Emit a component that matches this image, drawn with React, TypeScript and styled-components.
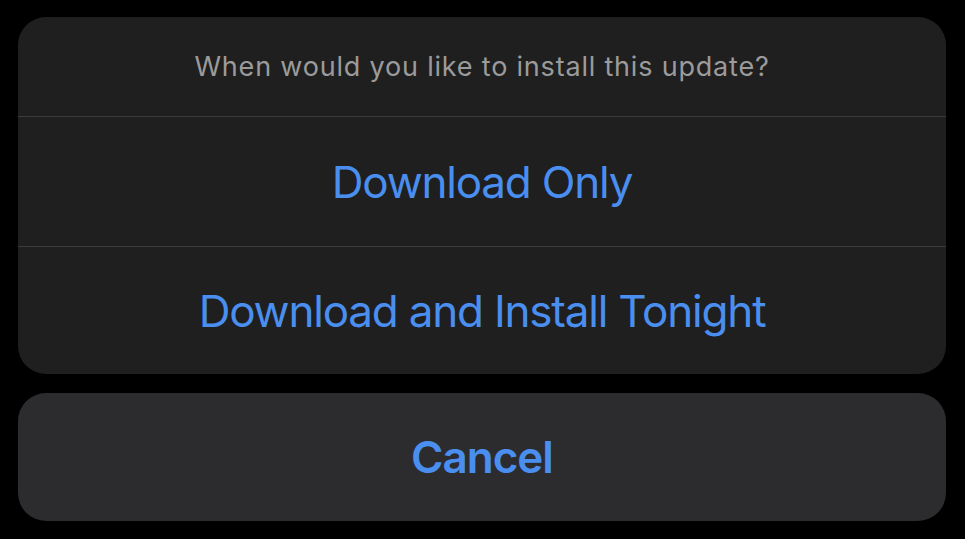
import styled, { createGlobalStyle } from 'styled-components'

const Global = createGlobalStyle`
  html, body {
    margin: 0;
    background: #000;
    font-family: Inter, "Noto Sans", sans-serif;
    -webkit-font-smoothing: antialiased;
  }
`

const Sheet = styled.div`
  width: 965px;
  height: 539px;
  box-sizing: border-box;
  padding: 17px 19px 0 18px;
  display: flex;
  flex-direction: column;
  gap: 19px;
`

const Group = styled.div<{ $tone: string }>`
  background: ${p => p.$tone};
  border-radius: 28px;
  overflow: hidden;
  display: flex;
  flex-direction: column;
`

const Title = styled.div`
  height: 99px;
  display: flex;
  align-items: center;
  justify-content: center;
  color: #9b9b9b;
  font-size: 27px;
  letter-spacing: 0.8px;
  border-bottom: 1.5px solid #3c3c3e;
`

const Action = styled.button<{ $bold?: boolean; $divider?: boolean; $h: number }>`
  all: unset;
  height: ${p => p.$h}px;
  display: flex;
  align-items: center;
  justify-content: center;
  color: #4a8ff0;
  font-family: Inter, "Noto Sans", sans-serif;
  font-size: 44px;
  letter-spacing: ${p => (p.$bold ? -1 : -1.2)}px;
  font-weight: ${p => (p.$bold ? 600 : 400)};
  border-bottom: ${p => (p.$divider ? '1.5px solid #3c3c3e' : 'none')};
  cursor: pointer;
`

export default function App() {
  return (
    <>
      <Global />
      <Sheet>
        <Group $tone="#1f1f1f">
          <Title>When would you like to install this update?</Title>
          <Action $h={129} $divider>Download Only</Action>
          <Action $h={127}>Download and Install Tonight</Action>
        </Group>
        <Group $tone="#2c2c2e">
          <Action $h={128} $bold>Cancel</Action>
        </Group>
      </Sheet>
    </>
  )
}
